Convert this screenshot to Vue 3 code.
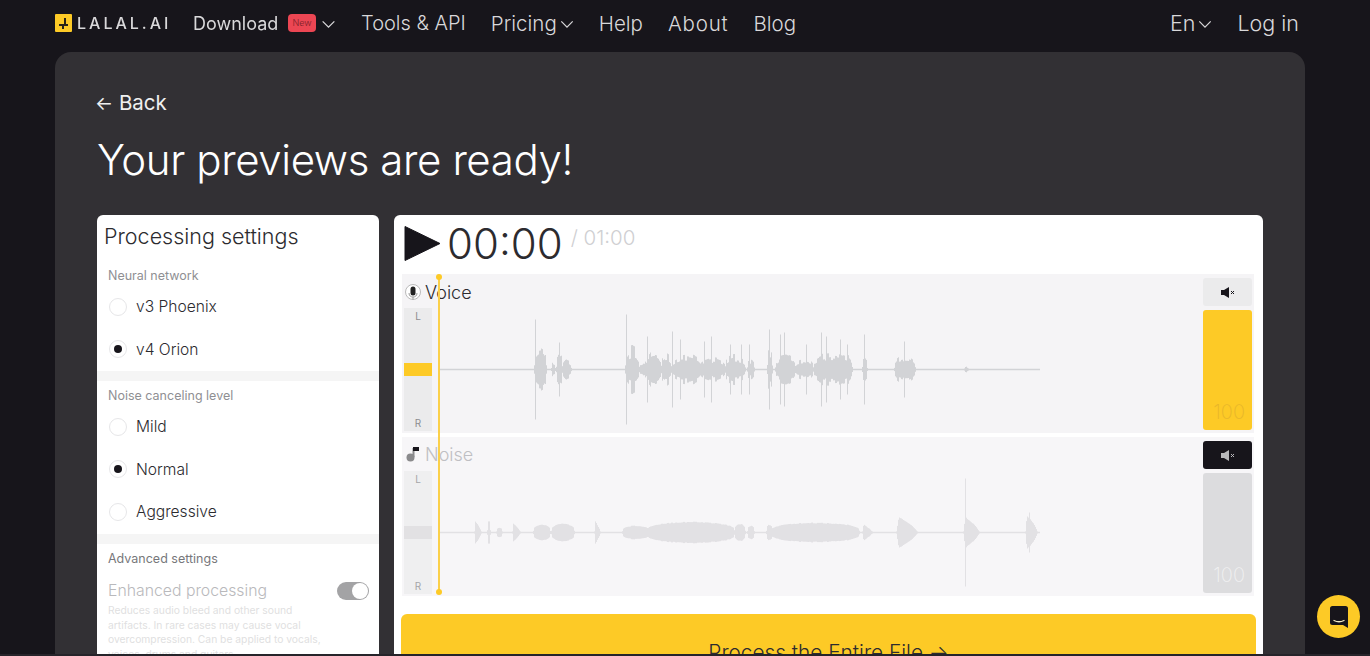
<template>
  <div class="page">
    <header class="nav">
      <div class="logo">
        <svg class="logo-mark" width="17" height="18" viewBox="0 0 17 18">
          <rect width="17" height="18" rx="1" fill="#fdca26" />
          <path d="M9 4h2v6h2v2H9v3H7v-3H4v-2h5z" fill="#2a2418" />
        </svg>
        <span class="logo-text">LALAL.AI</span>
      </div>
      <div class="nav-group first">
        <span class="blur-link">Download</span>
        <span class="badge">New</span>
        <svg class="chev big" viewBox="0 0 16 10"><path d="M1.5 1.5 8 8l6.5-6.5" /></svg>
      </div>
      <a class="nav-link tools">Tools &amp; API</a>
      <a class="nav-link with-chev">Pricing
        <svg class="chev" viewBox="0 0 16 10"><path d="M1.5 1.5 8 8l6.5-6.5" /></svg>
      </a>
      <a class="nav-link">Help</a>
      <a class="nav-link about">About</a>
      <a class="nav-link">Blog</a>
      <div class="nav-right">
        <a class="nav-link with-chev">En
          <svg class="chev" viewBox="0 0 16 10"><path d="M1.5 1.5 8 8l6.5-6.5" /></svg>
        </a>
        <a class="nav-link">Log in</a>
      </div>
    </header>

    <main class="panel">
      <a class="back"><span class="arrow">←</span> Back</a>
      <h1>Your previews are ready!</h1>

      <div class="columns">
        <aside class="settings">
          <h2>Processing settings</h2>
          <section class="group first-group">
            <div class="group-label">Neural network</div>
            <label v-for="o in networks" :key="o.name" class="radio-row">
              <span class="radio" :class="{ on: o.on }"></span>{{ o.name }}
            </label>
          </section>
          <section class="group">
            <div class="group-label">Noise canceling level</div>
            <label v-for="o in levels" :key="o.name" class="radio-row">
              <span class="radio" :class="{ on: o.on }"></span>{{ o.name }}
            </label>
          </section>
          <section class="group advanced">
            <div class="group-label dark">Advanced settings</div>
            <div class="toggle-row">
              <span>Enhanced processing</span>
              <span class="toggle"><i></i></span>
            </div>
            <p>Reduces audio bleed and other sound artifacts. In rare cases may cause vocal overcompression. Can be applied to vocals, voices, drums and guitars.</p>
          </section>
        </aside>

        <section class="player">
          <div class="transport">
            <svg class="play" width="37" height="37" viewBox="0 0 37 37"><path d="M1 1.5 36 18.5 1 35.5z" fill="#17151b" stroke="#17151b" stroke-linejoin="round" /></svg>
            <span class="time">00:00</span>
            <span class="total">/ 01:00</span>
          </div>

          <div class="tracks">
            <div class="playhead"></div>

            <div v-for="t in tracks" :key="t.name" class="track" :class="{ muted: t.muted }">
              <div class="track-main">
                <div class="track-title">
                  <svg v-if="!t.muted" width="18" height="18" viewBox="0 0 18 18">
                    <circle cx="9" cy="9" r="7.5" fill="#fff" stroke="#bbb" />
                    <rect x="6.5" y="3.5" width="5" height="9" rx="2.5" fill="#222" />
                    <path d="M5 10c0 3 2 4 4 4s4-1 4-4M9 14v2.5" fill="none" stroke="#999" />
                  </svg>
                  <svg v-else width="18" height="18" viewBox="0 0 18 18">
                    <circle cx="6.5" cy="12.5" r="4" fill="#8a8a8c" />
                    <path d="M9.5 12V3" stroke="#8a8a8c" stroke-width="2" />
                    <rect x="9" y="2" width="6" height="4" fill="#17151b" />
                  </svg>
                  <span>{{ t.name }}</span>
                </div>
                <div class="track-body">
                  <div class="pan">
                    <span>L</span>
                    <i class="pan-mark"></i>
                    <span>R</span>
                  </div>
                  <svg class="wave" width="601" height="123" viewBox="0 0 601 123">
                    <path :d="t.path" :stroke="t.color" stroke-width="1" fill="none" />
                    <path d="M0 61.5H601" :stroke="t.color" stroke-width="1.5" />
                  </svg>
                </div>
              </div>
              <div class="track-side">
                <button class="mute">
                  <svg width="14" height="11" viewBox="0 0 14 11">
                    <path d="M0 3h3l5-3v11L3 8H0z" fill="currentColor" />
                    <path d="m10 4 3 3m0-3-3 3" stroke="currentColor" fill="none" />
                  </svg>
                </button>
                <div class="volume"><span>100</span></div>
              </div>
            </div>
          </div>

          <button class="process">Process the Entire File →</button>
        </section>
      </div>
    </main>

    <button class="chat">
      <svg width="18" height="22" viewBox="0 0 18 22">
        <path d="M2.5 0h13A2.5 2.5 0 0 1 18 2.5V22l-5-3H2.5A2.5 2.5 0 0 1 0 16.5v-14A2.5 2.5 0 0 1 2.5 0z" fill="#17151b" />
        <path d="M4 14.5c3 1.5 7 1.5 10 0" stroke="#f6ecc4" stroke-width="1.3" fill="none" stroke-linecap="round" />
      </svg>
    </button>
    <div class="edge"></div>
  </div>
</template>

<script setup>
const networks = [
  { name: 'v3 Phoenix', on: false },
  { name: 'v4 Orion', on: true }
]

const levels = [
  { name: 'Mild', on: false },
  { name: 'Normal', on: true },
  { name: 'Aggressive', on: false }
]

// waveform shapes are in page pixels: [from, to, half height, decay], spikes: [x, half height]
const voiceBlobs = [
  [535, 547, 25], [552, 556, 10], [557, 563, 18], [563, 572, 12],
  [626, 640, 26], [640, 648, 11], [648, 662, 24], [662, 672, 20], [672, 702, 18],
  [700, 726, 14], [726, 746, 17], [748, 755, 13], [768, 773, 24], [776, 796, 17],
  [795, 814, 11], [814, 853, 20], [863, 868, 13], [895, 916, 15], [965, 969, 4]
]
const voiceSpikes = [
  [536, 50], [560, 27], [627, 55], [648, 33], [673, 38], [681, 30], [705, 28], [712, 33],
  [731, 25], [742, 25], [750, 25], [770, 40], [781, 35], [785, 37], [807, 25], [822, 37],
  [827, 33], [841, 30], [848, 25], [865, 35], [905, 28]
]
const noiseBlobs = [
  [475, 482, 13, true], [488, 491, 12], [497, 503, 5], [513, 521, 10, true], [534, 551, 8], [552, 575, 9],
  [595, 601, 13, true], [623, 650, 7], [648, 735, 11], [735, 746, 9], [748, 755, 7], [767, 773, 8],
  [772, 860, 10], [863, 873, 9, true], [897, 918, 18, true], [964, 980, 18, true], [1026, 1038, 20, true]
]
const noiseSpikes = [[966, 54], [1030, 20]]

const rand = (x) => {
  const v = Math.sin(x * 12.9898) * 43758.5453
  return v - Math.floor(v)
}

const buildWave = (blobs, spikes, jitter) => {
  let d = ''
  blobs.forEach(([from, to, amp, decay]) => {
    for (let x = from; x <= to; x++) {
      const t = (x - from) / (to - from)
      const shape = decay ? Math.min(t * 8, 1) * Math.pow(1 - t, 0.7) : Math.pow(Math.sin(Math.PI * t), 0.35) * 0.8 + 0.2
      // neighbours share a value so the voice reads as clumps, not hair
      const h = Math.max(amp * shape * (1 - jitter * rand(Math.floor(x / 2))), 1)
      const px = x - 439.5
      d += `M${px} ${(61.5 - h).toFixed(1)}V${(61.5 + h).toFixed(1)}`
    }
  })
  spikes.forEach(([x, h]) => {
    d += `M${x - 439.5} ${61.5 - h}V${61.5 + h}`
  })
  return d
}

const tracks = [
  { name: 'Voice', muted: false, color: '#d2d3d6', path: buildWave(voiceBlobs, voiceSpikes, 0.6) },
  { name: 'Noise', muted: true, color: '#e2e1e4', path: buildWave(noiseBlobs, noiseSpikes, 0.1) }
]
</script>

<style>
html, body {
  margin: 0;
  background: #17151b;
  overflow: hidden;
}
</style>

<style scoped>
.page {
  position: relative;
  width: 1370px;
  height: 656px;
  overflow: hidden;
  background: #17151b;
  font-family: Inter, "Noto Sans", sans-serif;
  color: #2c2b2f;
}

.nav {
  display: flex;
  align-items: center;
  gap: 25px;
  height: 46px;
  padding: 0 71px 6px 55px;
  color: #d9d8da;
  font-size: 20.5px;
  font-weight: 300;
}

.logo {
  display: flex;
  align-items: center;
  gap: 5px;
  margin-right: -4px;
}

.logo-text {
  width: 95px;
  font-size: 16px;
  font-weight: 500;
  letter-spacing: 3px;
  white-space: nowrap;
  filter: blur(0.5px);
}

.nav-group {
  display: flex;
  align-items: center;
  gap: 8px;
}

.blur-link {
  width: 87px;
  font-size: 18px;
  font-weight: 400;
  filter: blur(0.5px);
}

.badge {
  width: 28px;
  height: 18px;
  border-radius: 4px;
  background: #ec4653;
  color: #7a2028;
  font-size: 9px;
  line-height: 18px;
  text-align: center;
}

.nav-link {
  display: flex;
  align-items: center;
  white-space: nowrap;
}

.tools {
  font-size: 20px;
}

.about {
  letter-spacing: 0.8px;
}

.with-chev {
  gap: 3px;
}

.chev {
  width: 14px;
  height: 9px;
  margin-top: 2px;
  fill: none;
  stroke: currentColor;
  stroke-width: 1.4;
}

.chev.big {
  width: 15px;
  margin-left: -3px;
}

.nav-right {
  display: flex;
  align-items: center;
  gap: 25px;
  margin-left: auto;
  font-size: 21.5px;
}

.panel {
  width: 1250px;
  margin-left: 55px;
  padding: 38px 42px 0;
  box-sizing: border-box;
  height: 760px;
  border-radius: 16px;
  background: #323034;
  color: #fff;
}

.back {
  display: block;
  font-size: 20.5px;
  line-height: 25px;
  color: #f0f0f0;
}

.arrow {
  margin-left: -2px;
  font-size: 19px;
}

h1 {
  margin: 17px 0 0;
  font-size: 42px;
  line-height: 54px;
  font-weight: 300;
  letter-spacing: -0.4px;
}

.columns {
  display: flex;
  align-items: flex-start;
  gap: 15px;
  margin-top: 28px;
  color: #2c2b2f;
}

.settings {
  width: 282px;
  flex: none;
  border-radius: 6px;
  background: #fff;
  overflow: hidden;
}

h2 {
  margin: 0;
  padding: 8px 7px 0;
  font-size: 21.5px;
  line-height: 26px;
  font-weight: 300;
}

.group {
  padding: 7px 11px 0;
  height: 146px;
  border-bottom: 10px solid #f5f5f5;
}

.first-group {
  height: 103px;
  padding-top: 19px;
}

.group-label {
  font-size: 12.5px;
  line-height: 15px;
  color: #8f8f93;
}

.group-label.dark {
  color: #77777b;
}

.radio-row {
  display: flex;
  align-items: center;
  gap: 9px;
  height: 42.5px;
  font-size: 15.6px;
  font-weight: 300;
}

.group-label + .radio-row {
  margin-top: 2.5px;
}

.radio {
  position: relative;
  width: 18px;
  height: 18px;
  margin-left: 1px;
  box-sizing: border-box;
  border: 1px solid #e6e6e8;
  border-radius: 50%;
  background: #fff;
}

.radio.on::after {
  content: "";
  position: absolute;
  left: 4px;
  top: 4px;
  width: 8px;
  height: 8px;
  border-radius: 50%;
  background: #17151b;
}

.group.advanced {
  height: auto;
  border-bottom: 0;
  padding-right: 10px;
}

.toggle-row {
  display: flex;
  align-items: center;
  justify-content: space-between;
  margin-top: 15px;
  color: #b9b9bc;
  font-size: 15.8px;
  font-weight: 300;
}

.toggle {
  display: flex;
  justify-content: flex-end;
  width: 32px;
  height: 18px;
  padding: 1px;
  box-sizing: border-box;
  border-radius: 9px;
  background: #a3a3a5;
}

.toggle i {
  width: 16px;
  height: 16px;
  border-radius: 50%;
  background: #fff;
}

.settings p {
  margin: 3px 0 0;
  width: 225px;
  color: #dfdfe1;
  font-size: 10.3px;
  line-height: 14.5px;
}

.player {
  width: 869px;
  flex: none;
  height: 480px;
  padding: 0 7px;
  box-sizing: border-box;
  border-radius: 6px;
  background: #fff;
}

.transport {
  display: flex;
  align-items: flex-start;
  height: 59px;
  padding: 10px 0 0 3px;
  box-sizing: border-box;
}

.time {
  margin-left: 6px;
  font-size: 42px;
  line-height: 38px;
  font-weight: 300;
}

.total {
  margin: 1px 0 0 8px;
  color: #cfcfd2;
  font-size: 20.5px;
  line-height: 24px;
  font-weight: 300;
}

.tracks {
  position: relative;
  display: flex;
  flex-direction: column;
  gap: 4px;
  margin-left: 1px;
  width: 852px;
}

.playhead {
  position: absolute;
  left: 36px;
  top: 1px;
  bottom: 2px;
  width: 2px;
  background: #fbd04a;
  z-index: 2;
}

.playhead::before,
.playhead::after {
  content: "";
  position: absolute;
  left: -2px;
  width: 6px;
  height: 6px;
  border-radius: 50%;
  background: #fdca26;
}

.playhead::before {
  top: -1px;
}

.playhead::after {
  bottom: -1px;
}

.track {
  display: flex;
  height: 159px;
  padding: 0 2px;
  box-sizing: border-box;
  background: #f5f4f6;
}

.track-main {
  flex: 1;
  min-width: 0;
}

.track-title {
  display: flex;
  align-items: center;
  gap: 3px;
  height: 34px;
  padding-top: 2px;
  box-sizing: border-box;
  font-size: 18px;
  font-weight: 300;
}

.track.muted .track-title {
  padding-top: 0;
}

.track-body {
  display: flex;
  gap: 7px;
}

.pan {
  position: relative;
  display: flex;
  flex-direction: column;
  align-items: center;
  justify-content: space-between;
  width: 28px;
  height: 123px;
  padding: 2px 0;
  box-sizing: border-box;
  background: #ebebec;
  color: #8d8d90;
  font-size: 10px;
}

.pan-mark {
  position: absolute;
  left: 0;
  top: 55px;
  width: 28px;
  height: 13px;
  background: #fdca26;
}

.wave {
  display: block;
}

.track-side {
  display: flex;
  flex-direction: column;
  gap: 4px;
  flex: none;
  width: 49px;
  padding-top: 4px;
}

.mute {
  display: flex;
  align-items: center;
  justify-content: center;
  height: 28px;
  padding: 0;
  border: 0;
  border-radius: 3px;
  background: #ebebec;
  color: #17151b;
}

.volume {
  position: relative;
  height: 120px;
  border-radius: 3px;
  background: #fdca26;
}

.volume span {
  position: absolute;
  right: 7px;
  bottom: 6px;
  color: #e8b62a;
  font-size: 20px;
  font-weight: 200;
  line-height: 24px;
}

.track.muted {
  background: #f7f6f8;
}

.track.muted .track-title {
  color: #bfbfc3;
}

.track.muted .pan {
  background: #efeff0;
  color: #a5a5a8;
}

.track.muted .pan-mark {
  background: #e2e1e3;
}

.track.muted .mute {
  background: #17151b;
  color: #b9b9bb;
}

.track.muted .volume {
  background: #dcdcde;
}

.track.muted .volume span {
  color: #f0f0f1;
}

.process {
  display: block;
  width: 855px;
  height: 78px;
  margin-top: 18px;
  padding: 0;
  border: 0;
  border-radius: 6px;
  background: #fdca26;
  color: #2c2b2f;
  font-family: inherit;
  font-size: 20.8px;
  line-height: 24px;
  font-weight: 300;
}

.chat {
  position: absolute;
  left: 1317px;
  top: 595px;
  display: flex;
  align-items: center;
  justify-content: center;
  width: 43px;
  height: 43px;
  padding: 0;
  border: 0;
  border-radius: 50%;
  background: #fdca26;
}

.edge {
  position: absolute;
  left: 0;
  right: 0;
  bottom: 0;
  height: 2px;
  background: #26242a;
}
</style>
